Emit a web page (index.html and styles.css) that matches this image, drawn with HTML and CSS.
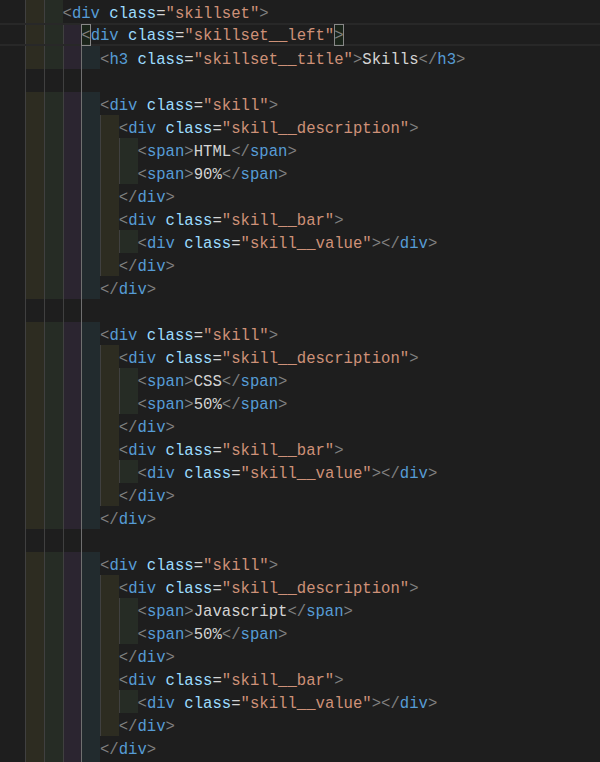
FILE: index.html
```html
<!DOCTYPE html>
<html lang="en">
<head>
<meta charset="utf-8">
<title>skillset.html</title>
<link rel="stylesheet" href="styles.css">
</head>
<body>
<div class="editor">
  <div class="ln"><i class="ind y"></i><i class="ind g"></i><code><span class="p">&lt;</span><span class="t">div</span> <span class="a">class</span><span class="x">=</span><span class="s">"skillset"</span><span class="p">&gt;</span></code></div>
  <div class="ln cur"><i class="ind y"></i><i class="ind g"></i><i class="ind v"></i><code><span class="bm p">&lt;</span><span class="t">div</span> <span class="a">class</span><span class="x">=</span><span class="s">"skillset__left"</span><span class="bm p">&gt;</span></code></div>
  <div class="ln"><i class="ind y"></i><i class="ind g"></i><i class="ind v"></i><i class="ind c act"></i><code><span class="p">&lt;</span><span class="t">h3</span> <span class="a">class</span><span class="x">=</span><span class="s">"skillset__title"</span><span class="p">&gt;</span><span class="x">Skills</span><span class="p">&lt;/</span><span class="t">h3</span><span class="p">&gt;</span></code></div>
  <div class="ln"><i class="ind"></i><i class="ind"></i><i class="ind"></i><i class="ind act"></i></div>

  <div class="ln"><i class="ind y"></i><i class="ind g"></i><i class="ind v"></i><i class="ind c act"></i><code><span class="p">&lt;</span><span class="t">div</span> <span class="a">class</span><span class="x">=</span><span class="s">"skill"</span><span class="p">&gt;</span></code></div>
  <div class="ln"><i class="ind y"></i><i class="ind g"></i><i class="ind v"></i><i class="ind c act"></i><i class="ind y"></i><code><span class="p">&lt;</span><span class="t">div</span> <span class="a">class</span><span class="x">=</span><span class="s">"skill__description"</span><span class="p">&gt;</span></code></div>
  <div class="ln"><i class="ind y"></i><i class="ind g"></i><i class="ind v"></i><i class="ind c act"></i><i class="ind y"></i><i class="ind g"></i><code><span class="p">&lt;</span><span class="t">span</span><span class="p">&gt;</span><span class="x">HTML</span><span class="p">&lt;/</span><span class="t">span</span><span class="p">&gt;</span></code></div>
  <div class="ln"><i class="ind y"></i><i class="ind g"></i><i class="ind v"></i><i class="ind c act"></i><i class="ind y"></i><i class="ind g"></i><code><span class="p">&lt;</span><span class="t">span</span><span class="p">&gt;</span><span class="x">90%</span><span class="p">&lt;/</span><span class="t">span</span><span class="p">&gt;</span></code></div>
  <div class="ln"><i class="ind y"></i><i class="ind g"></i><i class="ind v"></i><i class="ind c act"></i><i class="ind y"></i><code><span class="p">&lt;/</span><span class="t">div</span><span class="p">&gt;</span></code></div>
  <div class="ln"><i class="ind y"></i><i class="ind g"></i><i class="ind v"></i><i class="ind c act"></i><i class="ind y"></i><code><span class="p">&lt;</span><span class="t">div</span> <span class="a">class</span><span class="x">=</span><span class="s">"skill__bar"</span><span class="p">&gt;</span></code></div>
  <div class="ln"><i class="ind y"></i><i class="ind g"></i><i class="ind v"></i><i class="ind c act"></i><i class="ind y"></i><i class="ind g"></i><code><span class="p">&lt;</span><span class="t">div</span> <span class="a">class</span><span class="x">=</span><span class="s">"skill__value"</span><span class="p">&gt;&lt;/</span><span class="t">div</span><span class="p">&gt;</span></code></div>
  <div class="ln"><i class="ind y"></i><i class="ind g"></i><i class="ind v"></i><i class="ind c act"></i><i class="ind y"></i><code><span class="p">&lt;/</span><span class="t">div</span><span class="p">&gt;</span></code></div>
  <div class="ln"><i class="ind y"></i><i class="ind g"></i><i class="ind v"></i><i class="ind c act"></i><code><span class="p">&lt;/</span><span class="t">div</span><span class="p">&gt;</span></code></div>
  <div class="ln"><i class="ind"></i><i class="ind"></i><i class="ind"></i><i class="ind act"></i></div>

  <div class="ln"><i class="ind y"></i><i class="ind g"></i><i class="ind v"></i><i class="ind c act"></i><code><span class="p">&lt;</span><span class="t">div</span> <span class="a">class</span><span class="x">=</span><span class="s">"skill"</span><span class="p">&gt;</span></code></div>
  <div class="ln"><i class="ind y"></i><i class="ind g"></i><i class="ind v"></i><i class="ind c act"></i><i class="ind y"></i><code><span class="p">&lt;</span><span class="t">div</span> <span class="a">class</span><span class="x">=</span><span class="s">"skill__description"</span><span class="p">&gt;</span></code></div>
  <div class="ln"><i class="ind y"></i><i class="ind g"></i><i class="ind v"></i><i class="ind c act"></i><i class="ind y"></i><i class="ind g"></i><code><span class="p">&lt;</span><span class="t">span</span><span class="p">&gt;</span><span class="x">CSS</span><span class="p">&lt;/</span><span class="t">span</span><span class="p">&gt;</span></code></div>
  <div class="ln"><i class="ind y"></i><i class="ind g"></i><i class="ind v"></i><i class="ind c act"></i><i class="ind y"></i><i class="ind g"></i><code><span class="p">&lt;</span><span class="t">span</span><span class="p">&gt;</span><span class="x">50%</span><span class="p">&lt;/</span><span class="t">span</span><span class="p">&gt;</span></code></div>
  <div class="ln"><i class="ind y"></i><i class="ind g"></i><i class="ind v"></i><i class="ind c act"></i><i class="ind y"></i><code><span class="p">&lt;/</span><span class="t">div</span><span class="p">&gt;</span></code></div>
  <div class="ln"><i class="ind y"></i><i class="ind g"></i><i class="ind v"></i><i class="ind c act"></i><i class="ind y"></i><code><span class="p">&lt;</span><span class="t">div</span> <span class="a">class</span><span class="x">=</span><span class="s">"skill__bar"</span><span class="p">&gt;</span></code></div>
  <div class="ln"><i class="ind y"></i><i class="ind g"></i><i class="ind v"></i><i class="ind c act"></i><i class="ind y"></i><i class="ind g"></i><code><span class="p">&lt;</span><span class="t">div</span> <span class="a">class</span><span class="x">=</span><span class="s">"skill__value"</span><span class="p">&gt;&lt;/</span><span class="t">div</span><span class="p">&gt;</span></code></div>
  <div class="ln"><i class="ind y"></i><i class="ind g"></i><i class="ind v"></i><i class="ind c act"></i><i class="ind y"></i><code><span class="p">&lt;/</span><span class="t">div</span><span class="p">&gt;</span></code></div>
  <div class="ln"><i class="ind y"></i><i class="ind g"></i><i class="ind v"></i><i class="ind c act"></i><code><span class="p">&lt;/</span><span class="t">div</span><span class="p">&gt;</span></code></div>
  <div class="ln"><i class="ind"></i><i class="ind"></i><i class="ind"></i><i class="ind act"></i></div>

  <div class="ln"><i class="ind y"></i><i class="ind g"></i><i class="ind v"></i><i class="ind c act"></i><code><span class="p">&lt;</span><span class="t">div</span> <span class="a">class</span><span class="x">=</span><span class="s">"skill"</span><span class="p">&gt;</span></code></div>
  <div class="ln"><i class="ind y"></i><i class="ind g"></i><i class="ind v"></i><i class="ind c act"></i><i class="ind y"></i><code><span class="p">&lt;</span><span class="t">div</span> <span class="a">class</span><span class="x">=</span><span class="s">"skill__description"</span><span class="p">&gt;</span></code></div>
  <div class="ln"><i class="ind y"></i><i class="ind g"></i><i class="ind v"></i><i class="ind c act"></i><i class="ind y"></i><i class="ind g"></i><code><span class="p">&lt;</span><span class="t">span</span><span class="p">&gt;</span><span class="x">Javascript</span><span class="p">&lt;/</span><span class="t">span</span><span class="p">&gt;</span></code></div>
  <div class="ln"><i class="ind y"></i><i class="ind g"></i><i class="ind v"></i><i class="ind c act"></i><i class="ind y"></i><i class="ind g"></i><code><span class="p">&lt;</span><span class="t">span</span><span class="p">&gt;</span><span class="x">50%</span><span class="p">&lt;/</span><span class="t">span</span><span class="p">&gt;</span></code></div>
  <div class="ln"><i class="ind y"></i><i class="ind g"></i><i class="ind v"></i><i class="ind c act"></i><i class="ind y"></i><code><span class="p">&lt;/</span><span class="t">div</span><span class="p">&gt;</span></code></div>
  <div class="ln"><i class="ind y"></i><i class="ind g"></i><i class="ind v"></i><i class="ind c act"></i><i class="ind y"></i><code><span class="p">&lt;</span><span class="t">div</span> <span class="a">class</span><span class="x">=</span><span class="s">"skill__bar"</span><span class="p">&gt;</span></code></div>
  <div class="ln"><i class="ind y"></i><i class="ind g"></i><i class="ind v"></i><i class="ind c act"></i><i class="ind y"></i><i class="ind g"></i><code><span class="p">&lt;</span><span class="t">div</span> <span class="a">class</span><span class="x">=</span><span class="s">"skill__value"</span><span class="p">&gt;&lt;/</span><span class="t">div</span><span class="p">&gt;</span></code></div>
  <div class="ln"><i class="ind y"></i><i class="ind g"></i><i class="ind v"></i><i class="ind c act"></i><i class="ind y"></i><code><span class="p">&lt;/</span><span class="t">div</span><span class="p">&gt;</span></code></div>
  <div class="ln"><i class="ind y"></i><i class="ind g"></i><i class="ind v"></i><i class="ind c act"></i><code><span class="p">&lt;/</span><span class="t">div</span><span class="p">&gt;</span></code></div>
  <div class="ln"><i class="ind y"></i><i class="ind g"></i><i class="ind v"></i><i class="ind c act"></i></div>
</div>
</body>
</html>
```

FILE: styles.css
```css
html, body {
  margin: 0;
  padding: 0;
  height: 100%;
  overflow: hidden;
  background: #1e1e1e;
}

.editor {
  padding-left: 25px;
  font-family: "Liberation Mono", "DejaVu Sans Mono", monospace;
  font-size: 15.62px;
  color: #d4d4d4;
}

.ln {
  display: flex;
  height: 23px;
  line-height: 23px;
  white-space: pre;
  box-sizing: border-box;
}

.ln.cur {
  border-top: 2px solid #282828;
  border-bottom: 2px solid #282828;
  line-height: 19px;
  margin-left: -25px;
  padding-left: 25px;
}

.ind {
  display: block;
  flex: 0 0 18.75px;
  width: 18.75px;
  box-sizing: border-box;
  border-left: 1px solid #404040;
}

.ind.act { border-left-color: #707070; }

.ind.y { background: #2d2c21; }
.ind.g { background: #262c25; }
.ind.v { background: #2b2530; }
.ind.c { background: #222b2e; }

code {
  font: inherit;
  display: block;
  padding-top: 3px;
}

.ln.cur code { padding-top: 2px; }

.p { color: #808080; }
.t { color: #569cd6; }
.a { color: #9cdcfe; }
.s { color: #ce9178; }
.x { color: #d4d4d4; }

.bm {
  display: inline-block;
  box-sizing: border-box;
  height: 22px;
  margin-top: -3px;
  padding-top: 3px;
  line-height: 19px;
  vertical-align: top;
  outline: 1px solid #888888;
  outline-offset: -1px;
  background: rgba(0, 100, 0, 0.1);
}
```
